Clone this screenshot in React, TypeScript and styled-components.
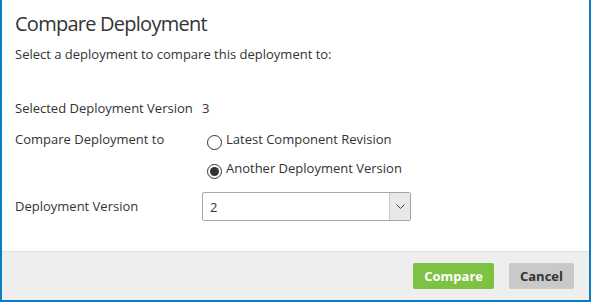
import React, { useState } from 'react';
import styled, { createGlobalStyle } from 'styled-components';

const GlobalStyle = createGlobalStyle`
    html, body {
        margin: 0;
        padding: 0;
        background: #fff;
    }
    body {
        font-family: 'Open Sans', 'Noto Sans', sans-serif;
        color: #333;
    }
`;

const Dialog = styled.div`
    width: 591px;
    height: 302px;
    box-sizing: border-box;
    border: 2px solid #0b7dc4;
    border-top: none;
    display: flex;
    flex-direction: column;
    background: #fff;
`;

const DialogBody = styled.div`
    flex: 1;
    padding: 10px 13px 0;
`;

const Title = styled.h1`
    margin: 0;
    font-size: 20px;
    line-height: 27px;
    font-weight: 400;
    letter-spacing: -0.75px;
    color: #333;
`;

const Intro = styled.p`
    margin: 8px 0 0;
    font-size: 13px;
    line-height: 18px;
`;

const Form = styled.div`
    margin-top: 36px;
    display: grid;
    grid-template-columns: 187px 210px;
    row-gap: 13px;
    font-size: 13px;
    line-height: 18px;
    align-items: start;
`;

const Label = styled.div<{ $center?: boolean }>`
    align-self: ${(p) => (p.$center ? 'center' : 'start')};
`;

const RadioGroup = styled.div`
    display: flex;
    flex-direction: column;
    gap: 11px;
`;

const RadioOption = styled.label`
    display: flex;
    align-items: flex-start;
    height: 18px;
    gap: 4px;
    margin-left: 5px;
    cursor: pointer;
`;

const RadioCircle = styled.span<{ $checked: boolean }>`
    width: 15px;
    height: 15px;
    margin-top: 5px;
    box-sizing: border-box;
    border: 1px solid #333;
    border-radius: 50%;
    display: flex;
    align-items: center;
    justify-content: center;
    flex-shrink: 0;

    &::after {
        content: '';
        width: 9px;
        height: 9px;
        border-radius: 50%;
        background: #333;
        display: ${(p) => (p.$checked ? 'block' : 'none')};
    }
`;

const SelectBox = styled.div`
    height: 29px;
    width: 209px;
    margin-top: 2px;
    box-sizing: border-box;
    border: 1px solid #a6a6a6;
    border-radius: 2px;
    display: flex;
    align-items: stretch;
    background: #fff;
`;

const SelectValue = styled.div`
    flex: 1;
    padding-left: 7px;
    display: flex;
    align-items: center;
`;

const SelectArrow = styled.div`
    width: 20px;
    border-left: 1px solid #c8c8c8;
    background: #e8e8e8;
    display: flex;
    align-items: center;
    justify-content: center;
`;

const Footer = styled.div`
    height: 49px;
    box-sizing: border-box;
    border-top: 1px solid #e2e2e2;
    background: #eeeeee;
    display: flex;
    justify-content: flex-end;
    align-items: center;
    gap: 15px;
    padding: 0 15px 1px;
`;

const Button = styled.button<{ $primary?: boolean }>`
    height: 26px;
    padding: 0 11px;
    border: none;
    border-radius: 2px;
    font-family: 'Open Sans', 'Noto Sans', sans-serif;
    font-size: 13px;
    font-weight: 700;
    color: ${(p) => (p.$primary ? '#fff' : '#333')};
    background: ${(p) => (p.$primary ? '#7dc242' : '#c9c9c9')};
    cursor: pointer;
`;

export default function App() {
    const [target, setTarget] = useState('another');

    return (
        <>
            <GlobalStyle />
            <Dialog>
                <DialogBody>
                    <Title>Compare Deployment</Title>
                    <Intro>Select a deployment to compare this deployment to:</Intro>
                    <Form>
                        <Label>Selected Deployment Version</Label>
                        <div>3</div>

                        <Label>Compare Deployment to</Label>
                        <RadioGroup>
                            <RadioOption onClick={() => setTarget('latest')}>
                                <RadioCircle $checked={target === 'latest'} />
                                Latest Component Revision
                            </RadioOption>
                            <RadioOption onClick={() => setTarget('another')}>
                                <RadioCircle $checked={target === 'another'} />
                                Another Deployment Version
                            </RadioOption>
                        </RadioGroup>

                        <Label $center>Deployment Version</Label>
                        <SelectBox>
                            <SelectValue>2</SelectValue>
                            <SelectArrow>
                                <svg width="9" height="5" viewBox="0 0 9 5">
                                    <path
                                        d="M0.5 0.5 L4.5 4.5 L8.5 0.5"
                                        fill="none"
                                        stroke="#444"
                                        strokeWidth="1"
                                    />
                                </svg>
                            </SelectArrow>
                        </SelectBox>
                    </Form>
                </DialogBody>
                <Footer>
                    <Button $primary>Compare</Button>
                    <Button>Cancel</Button>
                </Footer>
            </Dialog>
        </>
    );
}
